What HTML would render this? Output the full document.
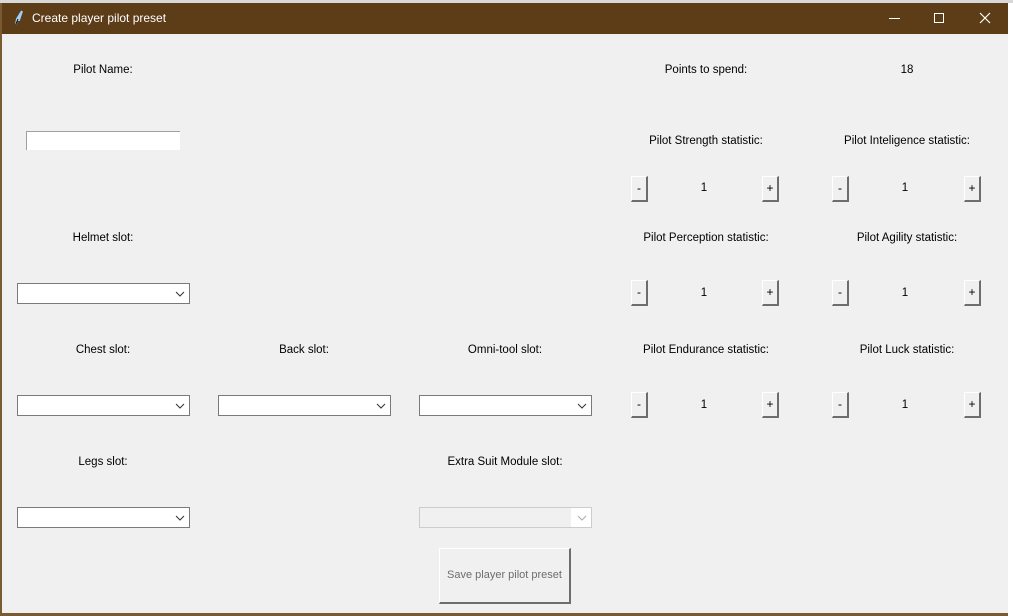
<!DOCTYPE html>
<html><head><style>
*{margin:0;padding:0;box-sizing:border-box}
body{width:1013px;height:616px;background:#f0f0f0;position:relative;overflow:hidden;font-family:"Liberation Sans",sans-serif;font-size:11.5px;color:#000}
.t{position:absolute;transform:translateX(-50%);white-space:nowrap;line-height:14px}
.cb{position:absolute;width:173px;height:21px;background:#fff;border:1px solid #7a7a7a}
.cb svg{position:absolute;right:4px;top:7px}
.b{position:absolute;width:17px;height:26px;background:#f0f0f0;border-top:1px solid #fff;border-left:1px solid #fff;border-right:2px solid #6d6d6d;border-bottom:2px solid #6d6d6d;text-align:center;line-height:22px;font-size:12px}
</style></head><body>
<div style="position:absolute;left:0;top:0;width:2px;height:616px;background:#7a5a30"></div>
<div style="position:absolute;left:1008px;top:0;width:5px;height:616px;background:#fff"></div>
<div style="position:absolute;left:0;top:0;width:1013px;height:3px;background:#d8d8d8"></div>
<div style="position:absolute;left:2px;top:3px;width:1006px;height:31px;background:#5d3d17"></div>
<div style="position:absolute;left:2px;top:613px;width:1006px;height:3px;background:#7a5a30"></div>
<svg style="position:absolute;left:14px;top:10px" width="10" height="16"><path d="M8 1 L3 9 L2 14 M8 1 L5 10 L3 10" stroke="#9cd0ff" stroke-width="2" fill="none"/><path d="M2 14 L4 9" stroke="#000" stroke-width="1"/></svg>
<div style="position:absolute;left:32px;top:11px;color:#fff;font-size:12px">Create player pilot preset</div>
<div style="position:absolute;left:889px;top:18px;width:11px;height:1px;background:#fff"></div>
<div style="position:absolute;left:934px;top:13px;width:10px;height:10px;border:1px solid #fff"></div>
<svg style="position:absolute;left:979px;top:12px" width="12" height="12"><path d="M1 1L11 11M11 1L1 11" stroke="#fff" stroke-width="1.2"/></svg>

<div class="t" style="left:103px;top:63px">Pilot Name:</div>
<div style="position:absolute;left:26px;top:131px;width:154px;height:19px;background:#fff;border:1px solid #a0a0a0;border-bottom:none;border-right:none"></div>

<div class="t" style="left:706px;top:63px">Points to spend:</div>
<div class="t" style="left:907px;top:63px">18</div>
<div class="t" style="left:706px;top:134px">Pilot Strength statistic:</div>
<div class="t" style="left:907px;top:134px">Pilot Inteligence statistic:</div>
<div class="t" style="left:706px;top:231px">Pilot Perception statistic:</div>
<div class="t" style="left:907px;top:231px">Pilot Agility statistic:</div>
<div class="t" style="left:706px;top:343px">Pilot Endurance statistic:</div>
<div class="t" style="left:907px;top:343px">Pilot Luck statistic:</div>

<div class="b" style="left:631px;top:176px">-</div><div class="t" style="left:704px;top:181px">1</div><div class="b" style="left:762px;top:176px">+</div>
<div class="b" style="left:832px;top:176px">-</div><div class="t" style="left:905px;top:181px">1</div><div class="b" style="left:964px;top:176px">+</div>
<div class="b" style="left:631px;top:280px">-</div><div class="t" style="left:704px;top:286px">1</div><div class="b" style="left:762px;top:280px">+</div>
<div class="b" style="left:832px;top:280px">-</div><div class="t" style="left:905px;top:286px">1</div><div class="b" style="left:964px;top:280px">+</div>
<div class="b" style="left:631px;top:392px">-</div><div class="t" style="left:704px;top:398px">1</div><div class="b" style="left:762px;top:392px">+</div>
<div class="b" style="left:832px;top:392px">-</div><div class="t" style="left:905px;top:398px">1</div><div class="b" style="left:964px;top:392px">+</div>

<div class="t" style="left:103px;top:231px">Helmet slot:</div>
<div class="cb" style="left:17px;top:283px"><svg width="10" height="6"><path d="M1 1L5 5L9 1" stroke="#333" fill="none"/></svg></div>
<div class="t" style="left:103px;top:343px">Chest slot:</div>
<div class="t" style="left:304px;top:343px">Back slot:</div>
<div class="t" style="left:505px;top:343px">Omni-tool slot:</div>
<div class="cb" style="left:17px;top:395px"><svg width="10" height="6"><path d="M1 1L5 5L9 1" stroke="#333" fill="none"/></svg></div>
<div class="cb" style="left:218px;top:395px"><svg width="10" height="6"><path d="M1 1L5 5L9 1" stroke="#333" fill="none"/></svg></div>
<div class="cb" style="left:419px;top:395px"><svg width="10" height="6"><path d="M1 1L5 5L9 1" stroke="#333" fill="none"/></svg></div>
<div class="t" style="left:103px;top:455px">Legs slot:</div>
<div class="t" style="left:505px;top:455px">Extra Suit Module slot:</div>
<div class="cb" style="left:17px;top:507px"><svg width="10" height="6"><path d="M1 1L5 5L9 1" stroke="#333" fill="none"/></svg></div>
<div class="cb" style="left:419px;top:507px;background:#f0f0f0;border-color:#cccccc"><div style="position:absolute;right:0;top:0;width:20px;height:19px;background:#fff"></div><svg width="10" height="6"><path d="M1 1L5 5L9 1" stroke="#aaa" fill="none"/></svg></div>

<div style="position:absolute;left:439px;top:548px;width:132px;height:56px;background:#f0f0f0;border-top:1px solid #fff;border-left:1px solid #fff;border-right:2px solid #6d6d6d;border-bottom:2px solid #6d6d6d;text-align:center;line-height:52px;color:#6d6d6d;font-size:11px">Save player pilot preset</div>
</body></html>
